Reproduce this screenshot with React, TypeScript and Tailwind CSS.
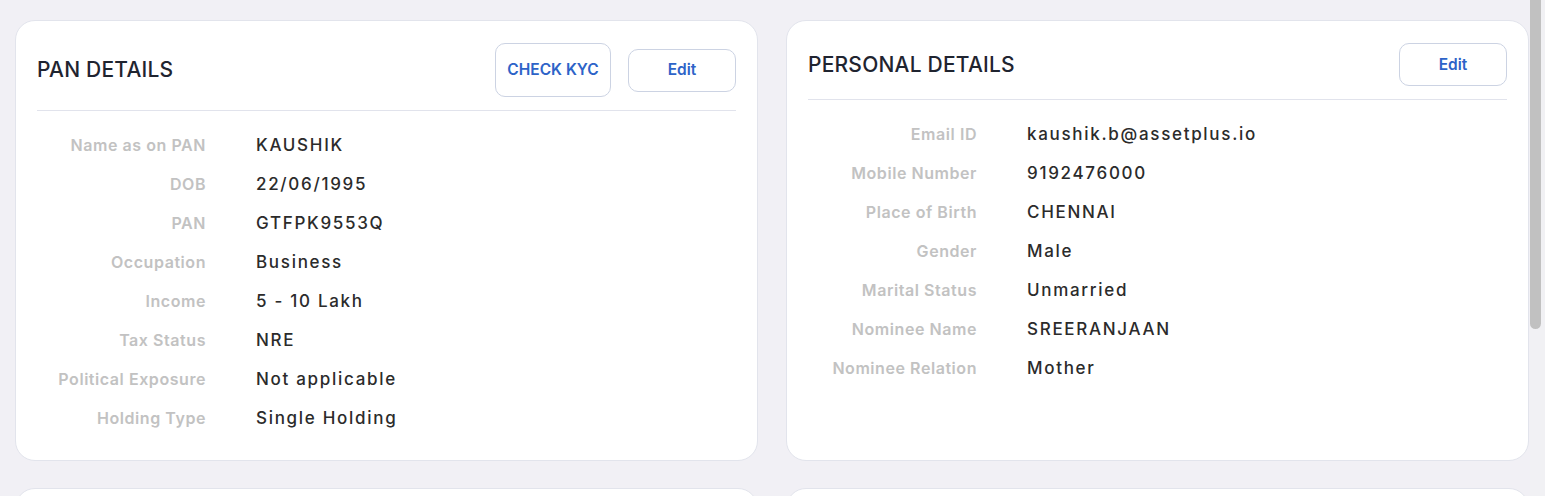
import * as React from "react";

type Row = { label: string; value: string };

const panRows: Row[] = [
  { label: "Name as on PAN", value: "KAUSHIK" },
  { label: "DOB", value: "22/06/1995" },
  { label: "PAN", value: "GTFPK9553Q" },
  { label: "Occupation", value: "Business" },
  { label: "Income", value: "5 - 10 Lakh" },
  { label: "Tax Status", value: "NRE" },
  { label: "Political Exposure", value: "Not applicable" },
  { label: "Holding Type", value: "Single Holding" },
];

const personalRows: Row[] = [
  { label: "Email ID", value: "kaushik.b@assetplus.io" },
  { label: "Mobile Number", value: "9192476000" },
  { label: "Place of Birth", value: "CHENNAI" },
  { label: "Gender", value: "Male" },
  { label: "Marital Status", value: "Unmarried" },
  { label: "Nominee Name", value: "SREERANJAAN" },
  { label: "Nominee Relation", value: "Mother" },
];

function OutlineButton({ children, className }: { children: React.ReactNode; className?: string }) {
  return (
    <button
      className={
        "flex items-center justify-center rounded-[10px] border border-[#ccd3e3] bg-white text-[15.5px] font-semibold text-[#2d63c8] " +
        (className ?? "")
      }
    >
      {children}
    </button>
  );
}

function DetailsCard({
  title,
  rows,
  actions,
}: {
  title: string;
  rows: Row[];
  actions: React.ReactNode;
}) {
  return (
    <div className="flex h-full flex-col rounded-[20px] border border-[#e2e4ec] bg-white px-[21px] pt-[22px]">
      <div className="flex items-center justify-between border-b border-[#e1e3ec] pb-[13px]">
        <h2 className="text-[21px] font-medium tracking-[0.01em] text-[#1f2430]">{title}</h2>
        <div className="flex items-center gap-[17px]">{actions}</div>
      </div>
      <div className="flex flex-col gap-[17px] pt-[23px]">
        {rows.map((r) => (
          <div key={r.label} className="flex items-center gap-[50px] leading-[22px]">
            <div className="w-[169px] shrink-0 text-right text-[16px] font-semibold tracking-[0.035em] text-[#c2c2c2]">
              {r.label}
            </div>
            <div className="text-[17px] font-medium tracking-[0.1em] text-[#2b2b2b]">{r.value}</div>
          </div>
        ))}
      </div>
    </div>
  );
}

export default function App() {
  return (
    <div className="flex h-[496px] w-[1545px] overflow-hidden bg-[#f1f0f5] font-['Inter','Liberation_Sans',sans-serif]">
      <div className="flex-1 pl-[15px] pt-[20px]">
        <div className="grid grid-cols-[743px_743px] gap-x-[28px] gap-y-[27px]">
          <div className="h-[441px]">
            <DetailsCard
              title="PAN DETAILS"
              rows={panRows}
              actions={
                <>
                  <OutlineButton className="h-[54px] w-[116px]">CHECK KYC</OutlineButton>
                  <OutlineButton className="h-[43px] w-[108px]">Edit</OutlineButton>
                </>
              }
            />
          </div>
          <div className="h-[441px]">
            <DetailsCard
              title="PERSONAL DETAILS"
              rows={personalRows}
              actions={<OutlineButton className="h-[43px] w-[108px]">Edit</OutlineButton>}
            />
          </div>
          <div className="h-[100px] rounded-[20px] border border-[#e2e4ec] bg-white" />
          <div className="h-[100px] rounded-[20px] border border-[#e2e4ec] bg-white" />
        </div>
      </div>
      <div className="flex w-[15px] shrink-0 bg-[#f1f1f4]">
        <div className="h-[329px] w-[11px] rounded-b-[6px] bg-[#c1c1c1]" />
      </div>
    </div>
  );
}
